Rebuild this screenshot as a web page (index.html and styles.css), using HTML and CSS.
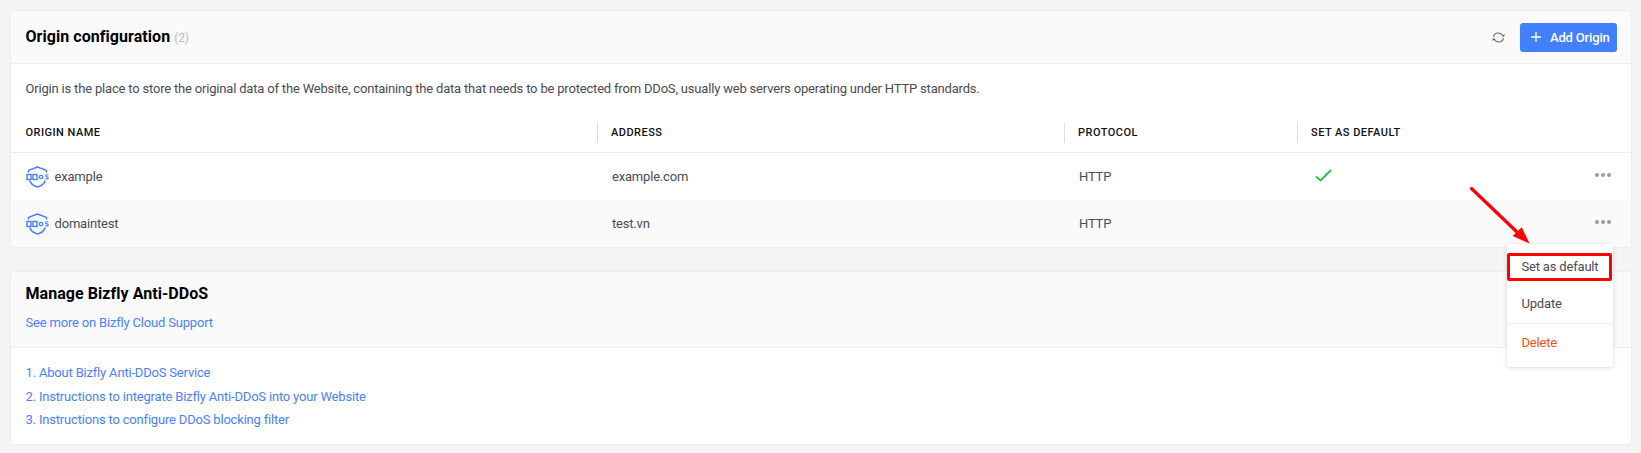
FILE: index.html
```html
<!DOCTYPE html>
<html lang="en">
<head>
<meta charset="utf-8">
<title>Origin configuration</title>
<link rel="stylesheet" href="styles.css">
</head>
<body>
<svg width="0" height="0" class="defs">
  <symbol id="ddos" viewBox="0 0 23 22">
    <path d="M2.500 6V4.400L11.500 1l9 3.400V6M4 15c.8 2.800 3.500 4.800 7.500 6 4-1.200 6.700-3.200 7.500-6" fill="none" stroke="#4380ff" stroke-width="1.500" stroke-linecap="round" stroke-linejoin="round"/>
    <rect x="1" y="8.500" width="4" height="5" fill="none" stroke="#4380ff" stroke-width="1.400"/>
    <rect x="7" y="8.500" width="4" height="5" fill="none" stroke="#4380ff" stroke-width="1.400"/>
    <circle cx="15" cy="11" r="1.700" fill="none" stroke="#4380ff" stroke-width="1.300"/>
    <path d="M22.200 9.200c-.4-.6-2.500-.8-2.500.6 0 1.300 2.600.8 2.600 2.100 0 1.300-2.300 1.200-2.800.5" fill="none" stroke="#4380ff" stroke-width="1.100"/>
  </symbol>
</svg>
<main class="page">
  <section class="card origin">
    <header class="card-head">
      <h2 class="title">Origin configuration <span class="count">(2)</span></h2>
      <div class="actions">
        <svg class="refresh" width="13" height="11" viewBox="0 0 13 11"><path d="M1.500 4.800C2 2.200 4.200 1 6.300 1 8 1 9.400 1.700 10.300 3M11.500 6.200C11 8.800 8.800 10 6.700 10 5 10 3.600 9.300 2.700 8" fill="none" stroke="#6b665f" stroke-width="1.100"/><path d="M12.800 2.200 12 5 9 3.800zM.2 8.800 1 6 4 7.200z" fill="#6b665f"/></svg>
        <button class="add-btn"><svg width="10" height="10" viewBox="0 0 10 10"><path d="M5 0v10M0 5h10" stroke="#fff" stroke-width="1.300"/></svg><span>Add Origin</span></button>
      </div>
    </header>
    <p class="desc">Origin is the place to store the original data of the Website, containing the data that needs to be protected from DDoS, usually web servers operating under HTTP standards.</p>
    <div class="table">
      <div class="row head">
        <div class="cell">ORIGIN NAME</div>
        <div class="cell sep">ADDRESS</div>
        <div class="cell sep">PROTOCOL</div>
        <div class="cell sep">SET AS DEFAULT</div>
        <div class="cell"></div>
      </div>
      <div class="row body">
        <div class="cell name"><svg class="ddos" width="23" height="22"><use href="#ddos"/></svg>example</div>
        <div class="cell val">example.com</div>
        <div class="cell val">HTTP</div>
        <div class="cell val"><svg class="check" width="17" height="13" viewBox="0 0 17 13"><path d="M1 7.500 5.500 11.500 16 1" fill="none" stroke="#27c13c" stroke-width="1.800"/></svg></div>
        <div class="cell more"><i></i><i></i><i></i></div>
      </div>
      <div class="row body alt">
        <div class="cell name"><svg class="ddos" width="23" height="22"><use href="#ddos"/></svg>domaintest</div>
        <div class="cell val">test.vn</div>
        <div class="cell val">HTTP</div>
        <div class="cell val"></div>
        <div class="cell more"><i></i><i></i><i></i></div>
      </div>
    </div>
  </section>

  <section class="card manage">
    <header class="manage-head">
      <h2 class="title">Manage Bizfly Anti-DDoS</h2>
      <a class="link" href="#">See more on Bizfly Cloud Support</a>
    </header>
    <ol class="links">
      <li><a class="link" href="#">1. About Bizfly Anti-DDoS Service</a></li>
      <li><a class="link" href="#">2. Instructions to integrate Bizfly Anti-DDoS into your Website</a></li>
      <li><a class="link" href="#">3. Instructions to configure DDoS blocking filter</a></li>
    </ol>
  </section>
</main>

<ul class="menu">
  <li class="item first">Set as default</li>
  <li class="item second">Update</li>
  <li class="item danger">Delete</li>
</ul>
<svg class="arrow" width="64" height="64" viewBox="0 0 64 64"><path d="M1.500 1.500 48 46" stroke="#f00" stroke-width="3.200" stroke-linecap="round"/><path d="M59.500 56.500 42.700 49 51.700 40.300z" fill="#f00"/></svg>
</body>
</html>
```
FILE: styles.css
```css
* { box-sizing: border-box; }
html, body { margin: 0; padding: 0; }
body {
  width: 1641px;
  height: 453px;
  overflow: hidden;
  background: #f4f4f4;
  font-family: Roboto, "Liberation Sans", sans-serif;
  font-size: 13px;
  letter-spacing: -.185px;
  color: #4a4a55;
  position: relative;
}
.defs { position: absolute; }
.page { padding: 11px 10px 0 11px; display: flex; flex-direction: column; gap: 25px; }
.card {
  background: #fff;
  border-radius: 3px;
  box-shadow: 0 0 2px rgba(0,0,0,.09);
  overflow: hidden;
}
.card-head {
  height: 53px;
  background: #fafafa;
  border-bottom: 1px solid #ededed;
  padding: 0 14px 0 14.500px;
  display: flex;
  align-items: center;
  justify-content: space-between;
}
.title { margin: 0; font-size: 16px; font-weight: 700; color: #000; line-height: 20px; letter-spacing: .05px; }
.count { font-size: 12px; font-weight: 400; color: #bbb; letter-spacing: -.1px; }
.actions { display: flex; align-items: center; gap: 15px; }
.refresh { display: block; }
.add-btn {
  width: 97px;
  height: 29px;
  border: 0;
  border-radius: 3px;
  background: #4380ff;
  color: #fff;
  font: 500 13px Roboto, sans-serif;
  letter-spacing: -.17px;
  display: flex;
  align-items: center;
  padding: 0 0 0 11px;
  gap: 9px;
}
.desc { margin: 0; padding: 16px 14.500px 0; height: 46px; line-height: 18px; color: #4a4a55; }
.row { display: grid; grid-template-columns: 586px 467px 233px 1fr 110px; align-items: center; }
.head { height: 43px; border-bottom: 1px solid #ededed; padding-top: 4px; }
.head .cell {
  font-size: 11px;
  font-weight: 500;
  letter-spacing: .47px;
  color: #111;
  padding-left: 14.500px;
  height: 20px;
  line-height: 20px;
}
.head .sep { border-left: 1px solid #ddd; padding-left: 13px; }
.body { height: 47px; }
.alt { background: #fafafa; }
.cell.name { display: flex; align-items: center; gap: 6px; padding-left: 14.500px; }
.ddos { display: block; }
.cell.val { padding-left: 15px; }
.check { display: block; margin: -3px 0 0 3px; }
.more { display: flex; justify-content: flex-end; gap: 2px; padding-right: 20px; margin-top: -3px; }
.more i { width: 4px; height: 4px; border-radius: 50%; background: #9a9a9a; }
.manage-head { height: 76px; background: #fafafa; border-bottom: 1px solid #ededed; padding: 12px 14.500px 0; }
.manage-head .link { display: block; margin-top: 10px; line-height: 18px; }
.link { color: #4a80ff; text-decoration: none; }
.links { list-style: none; margin: 0; padding: 15px 14.500px 0; height: 96px; }
.links li { height: 23.500px; line-height: 20px; }
.menu {
  position: absolute;
  left: 1507px;
  top: 244px;
  width: 106px;
  height: 123px;
  margin: 0;
  padding: 0;
  list-style: none;
  background: #fff;
  border-radius: 3px;
  box-shadow: 0 1px 5px rgba(0,0,0,.14);
}
.item { padding-left: 14.500px; height: 38px; line-height: 38px; }
.first { height: 28px; line-height: 28px; margin: 9px 0 0 0; outline: 3px solid #f00; outline-offset: -3px; border-radius: 2px; width: 105px; }
.second { margin-top: 5px; height: 38px; line-height: 36px; border-bottom: 1px solid #f0f0f0; }
.danger { color: #ff4d12; }
.arrow { position: absolute; left: 1470px; top: 187px; }
```
